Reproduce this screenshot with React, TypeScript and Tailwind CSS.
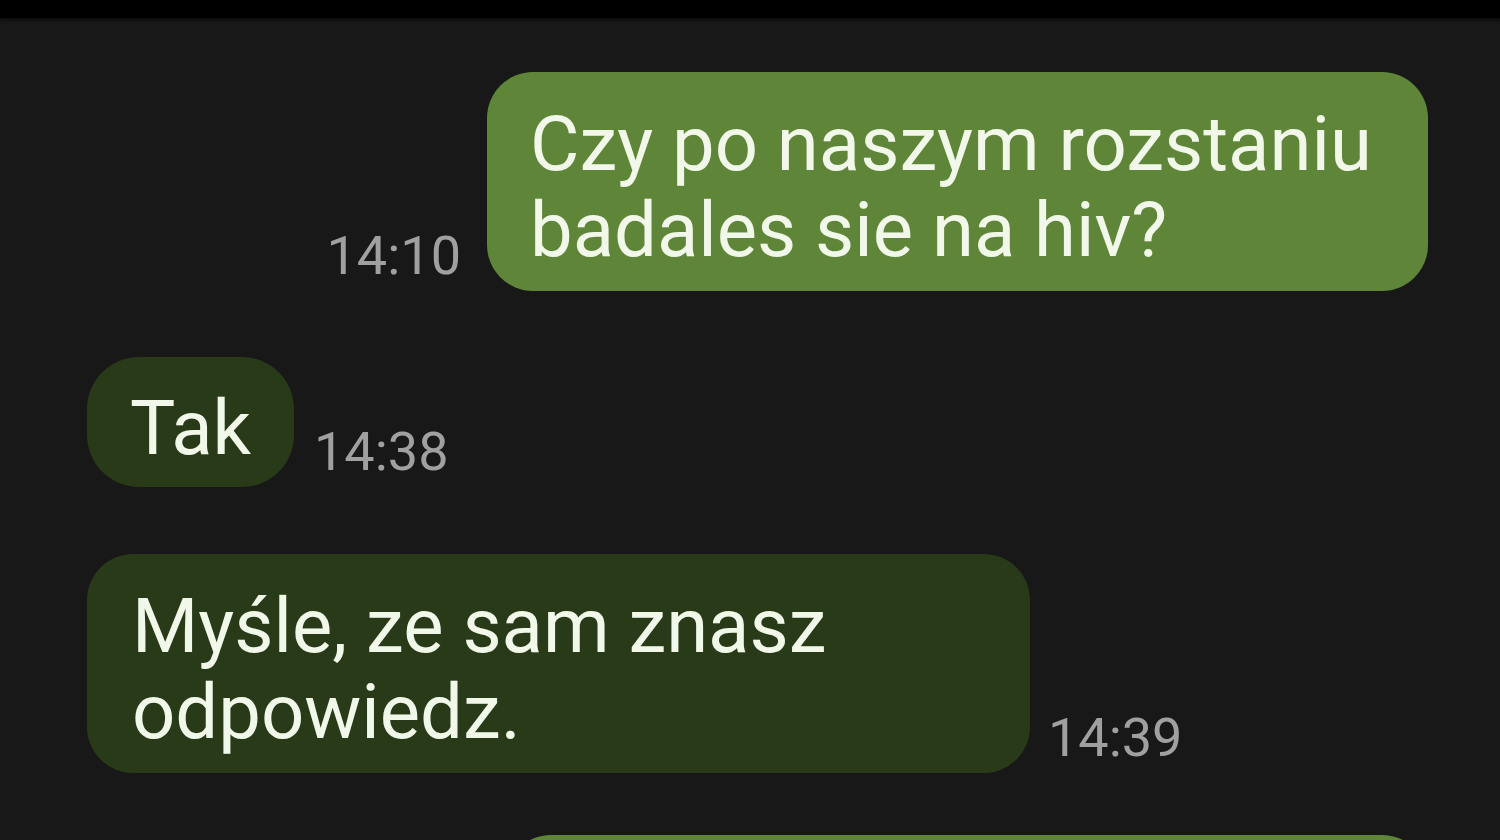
import React from 'react';

const font = { fontFamily: 'Roboto, "Noto Sans", sans-serif' };

const Time: React.FC<{ children: React.ReactNode }> = ({ children }) => (
    <span className="text-[54px] leading-none text-[#a0a0a0] mb-[8px] shrink-0">{children}</span>
);

export default function App() {
    return (
        <div className="w-[1500px] h-[840px] overflow-hidden bg-[#181818] flex flex-col" style={font}>
            <div className="h-[18px] bg-black shrink-0 shadow-[0_2px_3px_rgba(0,0,0,0.6)]" />

            <div className="flex flex-col pt-[54px]">
                {/* outgoing */}
                <div className="flex items-end justify-end gap-[26px] pr-[72px]">
                    <Time>14:10</Time>
                    <div className="w-[941px] rounded-[46px] bg-[#5f8538] pl-[43px] pr-[30px] pt-[29px] pb-[18px] text-[76px] leading-[86px] text-[#f1f8e9]">
                        Czy po naszym rozstaniu badales sie na hiv?
                    </div>
                </div>

                {/* incoming */}
                <div className="flex items-end gap-[20px] pl-[87px] mt-[66px]">
                    <div className="rounded-[52px] bg-[#283a18] px-[43px] pt-[28px] pb-[16px] text-[76px] leading-[86px] text-[#f1f8e9]">
                        Tak
                    </div>
                    <Time>14:38</Time>
                </div>

                <div className="flex items-end gap-[18px] pl-[87px] mt-[67px]">
                    <div className="w-[943px] rounded-[46px] bg-[#283a18] pl-[45px] pr-[30px] pt-[29px] pb-[18px] text-[76px] leading-[86px] text-[#f1f8e9]">
                        Myśle, ze sam znasz odpowiedz.
                    </div>
                    <Time>14:39</Time>
                </div>

                {/* next outgoing, cut off */}
                <div className="flex justify-end pr-[72px] mt-[62px]">
                    <div className="w-[923px] h-[200px] rounded-[46px] bg-[#5f8538]" />
                </div>
            </div>
        </div>
    );
}
